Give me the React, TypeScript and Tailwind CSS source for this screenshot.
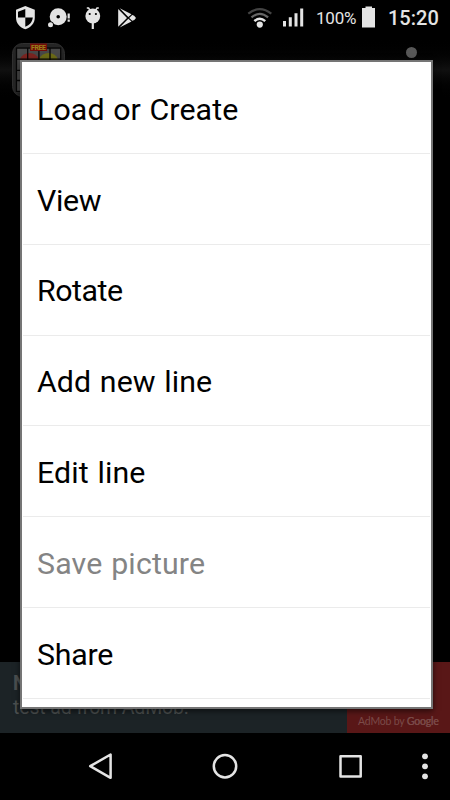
import clsx from 'clsx';

interface IMenuItem {
  label: string;
  tracking: string;
  disabled?: boolean;
}

const menuItems: IMenuItem[] = [
  { label: 'Load or Create', tracking: 'tracking-[0.1px]' },
  { label: 'View', tracking: 'tracking-[-0.35px]' },
  { label: 'Rotate', tracking: 'tracking-[-0.45px]' },
  { label: 'Add new line', tracking: 'tracking-[0.1px]' },
  { label: 'Edit line', tracking: 'tracking-[0.12px]' },
  { label: 'Save picture', tracking: 'tracking-[0.17px]', disabled: true },
  { label: 'Share', tracking: 'tracking-[-0.25px]' },
];

function NotificationIcons() {
  return (
    <svg width="150" height="36" viewBox="0 0 150 36" fill="#e4e4e4">
      {/* shield */}
      <path d="M25.3 6 34.8 9.8V17.5C34.8 23 31 27.5 25.3 29.2 19.6 27.5 16 23 16 17.5V9.8Z" />
      <path d="M25.3 9V17.5H18V11.8ZM25.3 17.5H32.8C32.4 22 29.6 25 25.3 26.8Z" fill="#000" />
      {/* disc */}
      <circle cx="58.2" cy="16.7" r="8.5" />
      <circle cx="50.5" cy="24.7" r="3.2" fill="#000" />
      <circle cx="50.5" cy="24.7" r="2.5" />
      <circle cx="58.2" cy="16.7" r="1.8" fill="#000" />
      <path d="M67.6 13.5h2.200v5h-2.200zM67.600 19.600h2.200v2.200h-2.200z" />
      {/* android lollipop */}
      <circle cx="92.8" cy="16" r="7.4" />
      <path d="M91.700 23h2.200v6h-2.200z" />
      <path d="M86.800 8h1.800l1.600 2.500M98.800 8h-1.800l-1.600 2.500" fill="none" stroke="#e4e4e4" strokeWidth="1.5" />
      <circle cx="89.7" cy="14" r="1.1" fill="#000" />
      <circle cx="95.9" cy="14" r="1.1" fill="#000" />
      {/* play store */}
      <path d="M118.200 9 127 17.900 118.200 26.800Z" />
      <path d="M119.700 8.300 131.500 14.300 128.300 17ZM119.700 27.500 131.500 21.500 128.300 18.800Z" />
      <path d="M129.200 17.900 132.200 15Q134 14.800 136 17.900 134 21 132.200 20.800Z" />
    </svg>
  );
}

function SystemIcons() {
  return (
    <svg width="64" height="36" viewBox="246 0 64 36" fill="none">
      <path d="M248.3 13.600Q259.800 4.600 271.300 13.600" stroke="#444" strokeWidth="2.200" />
      <path d="M251.500 17.400Q259.800 10.400 268.100 17.400" stroke="#666" strokeWidth="2.200" />
      <path d="M254.400 21.200Q259.800 16.200 265.200 21.200" stroke="#e4e4e4" strokeWidth="2.500" />
      <circle cx="259.8" cy="24.600" r="3.100" fill="#e4e4e4" />
      <path d="M283 21h3v5.600h-3zM288.800 17.200h3v9.400h-3zM294.500 13.200h3v13.400h-3zM300.200 8.500h3v18.100h-3z" fill="#e4e4e4" />
    </svg>
  );
}

function StatusBar() {
  return (
    <div className="flex h-9 shrink-0 items-center bg-black text-[#e4e4e4]">
      <NotificationIcons />
      <div className="ml-auto flex h-9 items-center">
        <SystemIcons />
        <span className="ml-[6px] w-[45px] text-[17px] leading-9 tracking-[-0.2px] whitespace-nowrap">
          100%
        </span>
        <svg width="16" height="36" viewBox="361 0 16 36" fill="#e4e4e4">
          <path d="M365.5 6.500h6.500v1.500h3v19.500h-13V8h3.500z" />
        </svg>
        <span className="ml-[11px] w-[62px] text-xl leading-9 font-medium">
          15:20
        </span>
      </div>
    </div>
  );
}

function AppLogo() {
  return (
    <svg width="54" height="54" viewBox="0 0 54 54">
      <rect x="0.5" y="0.5" width="52" height="53" rx="10" fill="#252525" stroke="#303030" />
      <rect x="4" y="4.500" width="45" height="45" fill="#484848" />
      <path d="M8 16.500a10 9.500 0 0 1 19 0v8H8z" fill="#7a2420" />
      <path d="M27 16.500a10 9.500 0 0 1 19 0v8H27z" fill="#6b6a16" />
      <path
        d="M4.500 4.500V49M15.700 4.500V49M26.900 4.500V49M38 4.500V49M48.700 4.500V49M4 5H49M4 16.200H49M4 27.400H49M4 37.500H49M4 48.500H49"
        stroke="#060606"
        strokeWidth="1.300"
      />
      <rect x="18" y="0.500" width="17" height="7.500" fill="#720c08" />
      <text x="26.5" y="6.900" textAnchor="middle" fontSize="7" fontWeight="700" fill="#98801a" textLength="15" fontFamily="Roboto, sans-serif">
        FREE
      </text>
    </svg>
  );
}

function ActionBar() {
  return (
    <div className="flex h-[67px] shrink-0 bg-linear-to-b from-black via-[#101010] to-black pt-[7px] pl-3">
      <AppLogo />
      <div className="mt-1 mr-[33px] ml-auto h-[11px] w-[11px] rounded-full bg-[#585858]"></div>
    </div>
  );
}

function AdBanner() {
  return (
    <div className="flex h-[71px] shrink-0 bg-[#1c2326] text-[#4c5050]">
      <div className="flex-1 pt-[10px] pl-[13px] text-[19.500px] leading-[23.500px] tracking-[-0.15px]">
        <div className="font-bold">Nice job!</div>
        <div className="whitespace-nowrap">test ad from AdMob.</div>
      </div>
      <div className="flex w-[103px] items-end bg-[#591717] pb-[5px] pl-[11px] font-[Lato] text-[10.500px] leading-[14px] tracking-[-0.2px] whitespace-nowrap text-[#7a4a48]">
        AdMob by&nbsp;<span className="[text-shadow:0.3px_0_0_currentColor]">Google</span>
      </div>
    </div>
  );
}

function NavigationBar() {
  return (
    <div className="h-[67px] shrink-0 bg-black">
      <svg width="450" height="67" viewBox="0 733 450 67" fill="none" stroke="#e4e4e4" strokeWidth="2.500">
        <path d="M110.600 754.500V777.800L90.200 766.200Z" strokeLinejoin="round" />
        <circle cx="225" cy="766.300" r="11.200" />
        <rect x="340.500" y="756.300" width="20.200" height="20.200" strokeLinejoin="round" />
        <g fill="#e4e4e4" stroke="none">
          <circle cx="425" cy="756.300" r="2.900" />
          <circle cx="425" cy="766.300" r="2.900" />
          <circle cx="425" cy="776.300" r="2.900" />
        </g>
      </svg>
    </div>
  );
}

function OptionsMenu() {
  return (
    <div className="absolute top-[60px] left-[20px] h-[649px] w-[413px] overflow-hidden border-2 border-[#757575] bg-white shadow-[0_2px_6px_rgba(0,0,0,0.6)]">
      <ul className="px-px pt-px">
        {menuItems.map((item) => (
          <li
            key={item.label}
            className={clsx(
              'flex h-[90.860px] items-center border-b border-[#ebebeb] pt-[3px] pl-[14px] text-[30.300px] [word-spacing:1px]',
              item.tracking,
              item.disabled ? 'text-[#848484]' : 'text-black'
            )}
          >
            {item.label}
          </li>
        ))}
      </ul>
    </div>
  );
}

export default function App() {
  return (
    <div className="relative flex h-[800px] w-[450px] flex-col overflow-hidden bg-black font-[Roboto,sans-serif]">
      <StatusBar />
      <ActionBar />
      <div className="flex-1"></div>
      <AdBanner />
      <NavigationBar />
      <OptionsMenu />
    </div>
  );
}
